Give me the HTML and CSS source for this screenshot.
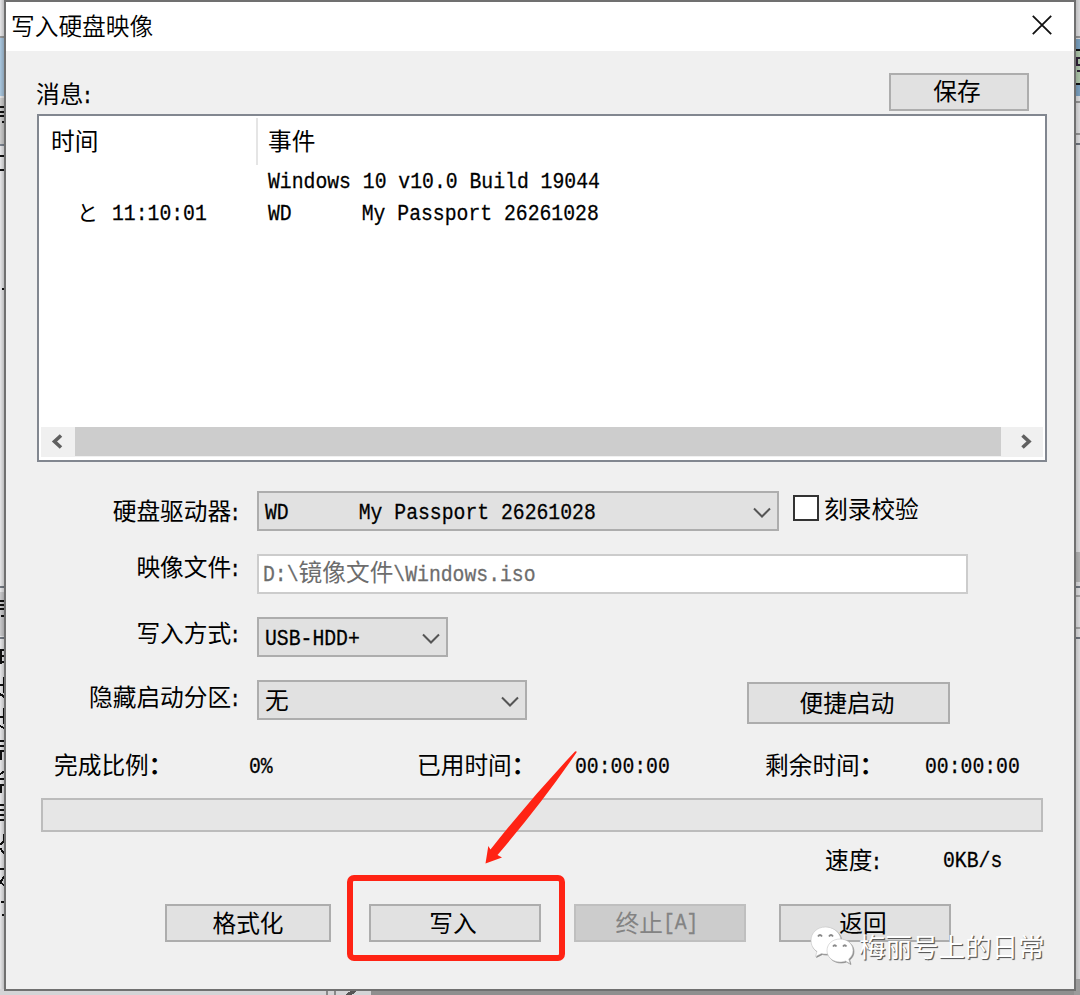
FILE: index.html
```html
<!DOCTYPE html>
<html lang="zh-CN">
<head>
<meta charset="utf-8">
<title>写入硬盘映像</title>
<link rel="stylesheet" href="styles.css">
</head>
<body>
<svg class="backdrop" width="1080" height="995" viewBox="0 0 1080 995" shape-rendering="crispEdges">
  <defs>
    <linearGradient id="shadeL"><stop offset="0" stop-color="#000" stop-opacity="0"/><stop offset="1" stop-color="#000" stop-opacity=".22"/></linearGradient>
    <linearGradient id="shadeR"><stop offset="0" stop-color="#000" stop-opacity=".2"/><stop offset="1" stop-color="#000" stop-opacity=".06"/></linearGradient>
  </defs>
  <rect width="1080" height="995" fill="#e6e6e8"/>
  <rect y="36" width="6" height="2" fill="#999"/>
  <rect y="38" width="6" height="58" fill="#a9c6de"/>
  <rect y="98" width="6" height="46" fill="#ccc"/>
  <rect y="144" width="6" height="2" fill="#7c8490"/>
  <path d="M0 107h6M0 112h6M0 116h4M2 122h4v6M0 156h5v14h-5M4 196h2M4 225h2M4 233h2M4 261h2M2 289h4v5" fill="none" stroke="#111" stroke-width="2"/>
  <rect y="586" width="6" height="2" fill="#737982"/><rect y="592" width="6" height="44" fill="#c9c9cb"/><rect y="637" width="6" height="2" fill="#737982"/>
  <path d="M0 601h6M0 605h6M0 609h6M1 616h5v8M0 650h6M0 656h6M0 662h6M1 650v14M0 685h6M4 677v16M0 694l6 4M0 717h6M4 708v16M0 726l6 3M0 741h6M0 746h6M0 751h6M1 751v9M0 774l5-3M0 779h6M0 785h6M1 785v8M0 805h6M0 810h6M0 815h6M0 820h6M4 834v7l-4 4M0 848l6 8M0 869h6M5 876l-5 6l5 4M1 902h4v13h-3" fill="none" stroke="#111" stroke-width="2"/>
  <rect width="5" height="995" fill="url(#shadeL)"/>
  <rect x="1074" y="36" width="6" height="2" fill="#999"/>
  <rect x="1074" y="39" width="6" height="57" fill="#7fa7c8"/>
  <rect x="1074" y="49" width="6" height="36" fill="#111"/><rect x="1074" y="51" width="6" height="32" fill="#b5ceb1"/>
  <path d="M1080 58h-3v7h3M1077 71h3" fill="none" stroke="#312339" stroke-width="2"/>
  <path d="M1074 102h6M1074 134h6" stroke="#999" stroke-width="2"/><path d="M1074 144h6M1074 587h6M1074 638h6" stroke="#737982" stroke-width="2"/>
  <rect x="1074" y="552" width="6" height="30" fill="#bbb"/><path d="M1074 596h6M1074 628h6" stroke="#aaa" stroke-width="2"/>
  <rect x="1075" width="5" height="995" fill="url(#shadeR)"/>
  <rect y="989" width="1080" height="6" fill="#d4d4d6"/>
  <rect x="371" y="989" width="709" height="6" fill="#8f8f8f"/><rect x="1074" y="979" width="6" height="16" fill="#9b9b9b"/>
  <path d="M327 989v6M335 989v6" stroke="#888" stroke-width="2"/><path d="M347 996l8-6" stroke="#555" stroke-width="4"/>
</svg>

<main class="dialog">
  <header class="titlebar">
    <h1 class="title">写入硬盘映像</h1>
    <svg class="close" width="20" height="20" viewBox="0 0 20 20"><path d="M.8.8 19.2 19.2M19.2.8.8 19.2"/></svg>
  </header>

  <div class="message-bar"><span class="message-label">消息<span class="en">:</span></span><button class="btn save">保存</button></div>

  <section class="log">
    <div class="log-head"><div class="col-time">时间</div><div class="col-event">事件</div></div>
    <div class="log-row"><div class="cell-time"></div><div class="cell-event"><span class="en">Windows 10 v10.0 Build 19044</span></div></div>
    <div class="log-row"><div class="cell-time"><span class="mark">と</span><span class="en">11:10:01</span></div><div class="cell-event"><span class="en">WD</span><span class="en passport">My Passport 26261028</span></div></div>
    <div class="scrollbar">
      <svg class="arrow" width="34" height="30" viewBox="0 0 34 30"><path d="M20 8.500l-6.500 6 6.500 6"/></svg>
      <div class="thumb"></div>
      <svg class="arrow" width="42" height="30" viewBox="0 0 42 30"><path d="M21.500 8.500l6.500 6-6.500 6"/></svg>
    </div>
  </section>

  <section class="form">
    <div class="row drive">
      <label class="label">硬盘驱动器<span class="en">:</span></label>
      <div class="select"><span class="en">WD</span><span class="en drive-name">My Passport 26261028</span><svg class="chev" width="18" height="12" viewBox="0 0 18 12"><path d="M1 1.500 9 9.500 17 1.500"/></svg></div>
      <span class="check"></span><span class="check-label">刻录校验</span>
    </div>
    <div class="row image">
      <label class="label">映像文件<span class="en">:</span></label>
      <div class="input"><span class="en">D:\</span>镜像文件<span class="en">\Windows.iso</span></div>
    </div>
    <div class="row method">
      <label class="label">写入方式<span class="en">:</span></label>
      <div class="select"><span class="en">USB-HDD+</span><svg class="chev" width="18" height="12" viewBox="0 0 18 12"><path d="M1 1.500 9 9.500 17 1.500"/></svg></div>
    </div>
    <div class="row hidden-part">
      <label class="label">隐藏启动分区<span class="en">:</span></label>
      <div class="select">无<svg class="chev" width="18" height="12" viewBox="0 0 18 12"><path d="M1 1.500 9 9.500 17 1.500"/></svg></div>
      <button class="btn quick">便捷启动</button>
    </div>
  </section>

  <div class="stats">
    <span>完成比例<b>：</b></span><span class="en">0%</span><span>已用时间<b>：</b></span><span class="en">00:00:00</span><span>剩余时间<b>：</b></span><span class="en">00:00:00</span>
  </div>
  <div class="progress"></div>
  <div class="speed"><span class="speed-label">速度<span class="en">:</span></span><span class="en">0KB/s</span></div>

  <footer class="actions">
    <button class="btn format">格式化</button>
    <button class="btn write">写入</button>
    <button class="btn abort" disabled>终止<span class="en">[A]</span></button>
    <button class="btn back">返回</button>
  </footer>
</main>

<div class="highlight"></div>
<svg class="pointer" width="100" height="120" viewBox="480 748 100 120"><path d="M485.500 863.500 488.300 846 490.500 849.500Q532 797 575 751.500Q577 750.500 576.500 752.500Q542 803 497.500 855L502 857.500Z"/></svg>

<div class="watermark">
  <svg class="wechat" width="44" height="40" viewBox="0 0 44 40">
    <path class="bubble" d="M15.500 1C7 1 1 7 1 14.500c0 4.500 2 8.500 6 11l-1.500 5 6-3c2 .5 5 .8 7 .3C32 27 32 17 30 10 27.500 4.500 22 1 15.500 1Z"/>
    <path class="bubble" d="M30 13c-7.500 0-13 5-13 11.500S22.500 36 30 36c2 0 4-.4 5.500-1l4.500 2.500-1.300-4.500C41.500 31 43 28 43 24.500 43 18 37.500 13 30 13Z"/>
    <path class="eyes" d="M8 10.500q2-3 4 0M19 10.500q2-3 4 0M23 20.500q1.700-2.500 3.500 0M33 20.500q1.700-2.500 3.500 0"/>
  </svg>
  <span class="account">梅丽号上的日常</span>
</div>
</body>
</html>
```
FILE: styles.css
```css
* { box-sizing: border-box; }
body {
  margin: 0; width: 1080px; height: 995px; overflow: hidden; position: relative;
  font: 23.7px/24px "Noto Sans CJK SC", sans-serif; color: #000;
}
.backdrop { position: absolute; left: 0; top: 0; }
.dialog {
  position: relative; display: flex; flex-direction: column;
  width: 1072px; height: 991px; margin-left: 4px;
  border: 2px solid #707070; background: #f0f0f0;
}
.en {
  display: inline-block; white-space: pre;
  font-family: "Liberation Mono", monospace; font-size: 19.76px;
  -webkit-text-stroke: 0.25px currentColor;
  transform: translateY(1.5px) scaleY(1.16);
}
.titlebar { display: flex; justify-content: space-between; align-items: flex-start; height: 49px; padding: 10px 22px 0 5px; background: #fff; }
.title { margin: 0; font-size: 23.7px; font-weight: 350; line-height: 26px; }
.close { margin-top: 3px; fill: none; stroke: #111; stroke-width: 1.8; }

.message-bar { display: flex; justify-content: space-between; height: 63px; padding: 22px 45px 0 30px; }
.message-label { padding-top: 8px; }
.message-label .en, .label .en, .speed-label .en { transform: translate(-2px, -1px) scaleY(1.16); }
.btn {
  display: flex; align-items: center; justify-content: center; height: 38px; padding: 0 0 3px;
  font: inherit; color: #000; background: #e1e1e1; border: 2px solid #adadad;
}
.save { width: 140px; height: 38px; padding: 0 4px 4px 0; }

.log { display: flex; flex-direction: column; width: 1010px; height: 348px; margin-left: 31px; padding: 2px 2px 3px; border: 2px solid #828790; background: #fff; }
.log-head { display: flex; height: 47px; }
.col-time { width: 217px; padding: 10px 0 0 10px; border-right: 2px solid #e5e5e5; }
.col-event { padding: 10px 0 0 10px; }
.log-row { display: flex; align-items: center; height: 32px; }
.cell-time { display: flex; width: 227px; padding-left: 36px; }
.mark { width: 35px; margin-top: -2px; font-size: 21px; }
.cell-event { display: flex; }
.passport { margin-left: 70px; }
.scrollbar { display: flex; height: 30px; margin-top: auto; background: #f0f0f0; }
.thumb { flex: 1; background: #cdcdcd; height: 29px; }
.arrow { fill: none; stroke: #606060; stroke-width: 3.6; }

.form { display: flex; flex-direction: column; padding-top: 29px; }
.row { display: flex; height: 63px; }
.label { width: 237px; padding-top: 7px; text-align: right; margin-right: 14px; }
.image .label { padding-top: 0; }
.method .label { padding-top: 3px; }
.hidden-part .label { padding-top: 4px; }
.select { display: flex; align-items: center; height: 40px; padding: 0 6px 2px; background: #e1e1e1; border: 2px solid #adadad; }
.select .en { transform: translateY(3px) scaleY(1.16); }
.drive .select { width: 522px; }
.method .select { width: 191px; }
.hidden-part .select { width: 270px; }
.drive-name { margin-left: 70px; }
.chev { margin: 5px 0 0 auto; fill: none; stroke: #555; stroke-width: 2; }
.check { width: 26px; height: 26px; margin: 4px 5px 0 14px; border: 2px solid #333; background: #fff; }
.check-label { padding-top: 5px; }
.input { width: 711px; height: 40px; padding: 3px 4px; border: 2px solid #ccc; background: #fff; color: #6d6d6d; }
.input .en { transform: translateY(-1px) scaleY(1.16); }
.quick { width: 203px; height: 42px; margin: 2px 0 0 220px; padding-right: 3px; }

.stats { display: grid; grid-template-columns: 195px 168px 158px 190px 160px 110px; height: 55px; padding: 9px 0 0 48px; }
.stats .en, .speed > .en { transform: translateY(4.5px) scaleY(1.16); }
.progress { width: 1002px; height: 34px; margin-left: 35px; background: #e6e6e6; border: 2px solid #bcbcbc; }
.speed { display: grid; grid-template-columns: 118px 80px; height: 72px; padding: 15px 0 0 819px; }
.actions { display: flex; padding-left: 159px; }
.format { width: 166px; }
.write { width: 172px; margin-left: 38px; padding-right: 4px; }
.abort { width: 172px; margin-left: 33px; padding-right: 6px; color: #838383; background: #ccc; border-color: #bfbfbf; }
.back { width: 172px; margin-left: 33px; padding-right: 4px; }

.highlight { position: absolute; left: 347px; top: 875px; width: 218px; height: 86px; border: 6px solid #ff2314; border-radius: 7px; }
.pointer { position: absolute; left: 480px; top: 748px; fill: #ff2314; }
.watermark { position: absolute; left: 810px; top: 926px; display: flex; gap: 5px; }
.wechat { filter: drop-shadow(1px 1px 0.500px #888); }
.bubble { fill: #fff; stroke: #c4c4c4; stroke-width: .6; }
.eyes { fill: none; stroke: #888; stroke-width: 1.8; }
.account { padding-top: 8px; font-size: 26.500px; color: #fff; text-shadow: 1px 1px 1px #555, 1px 1px 0 #888; }
```
